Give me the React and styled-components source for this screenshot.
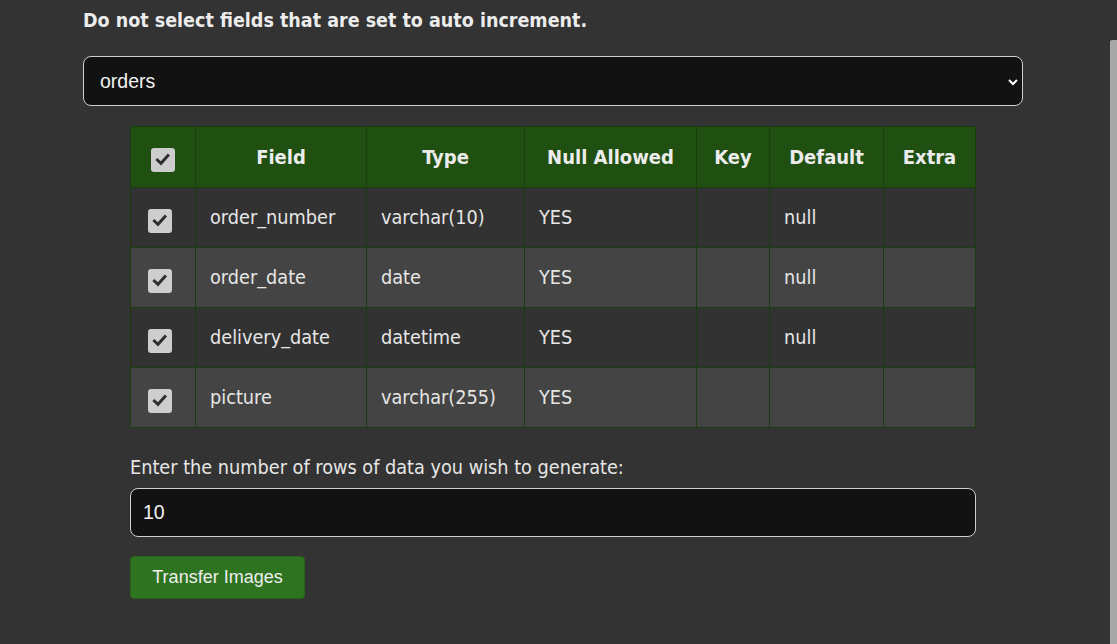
import React, { useLayoutEffect, useRef } from "react";
import styled, { createGlobalStyle } from "styled-components";

const Global = createGlobalStyle`
  html, body { margin: 0; background: #333333; overflow: hidden; }
  body { color: #e8e8e8; font-family: "DejaVu Sans Condensed", "DejaVu Sans", sans-serif; }
`;

const Viewport = styled.div`
  height: 100vh;
  overflow-y: scroll;
  background: #333333;
  &::-webkit-scrollbar { width: 7px; }
  &::-webkit-scrollbar-track { background: #333333; }
  &::-webkit-scrollbar-thumb { background: #a8a8a8; border-radius: 3px 0 0 0; }
`;

const ScrollThumb = styled.div`
  position: fixed;
  top: 40px;
  right: 0;
  bottom: 0;
  width: 7px;
  background: #a8a8a8;
  border-top-left-radius: 2px;
  pointer-events: none;
`;

const Page = styled.div`
  padding: 52px 0 45px 83px;
  box-sizing: border-box;
`;

const Panel = styled.div`
  width: 940px;
  display: flex;
  flex-direction: column;
`;

const Heading = styled.h2`
  margin: 0 0 23px;
  font-size: 19.5px;
  line-height: 24px;
  font-weight: bold;
  color: #ececec;
`;

const SelectWrap = styled.div`
  position: relative;
  height: 50px;
`;

const Select = styled.select`
  appearance: none;
  width: 100%;
  height: 50px;
  box-sizing: border-box;
  background: #121212;
  color: #f2f2f2;
  border: 1px solid #cfcfcf;
  border-radius: 8px;
  padding: 0 16px;
  font-family: "Liberation Sans", Arial, sans-serif;
  font-size: 19.5px;
  outline: none;
`;

const Chevron = styled.svg`
  position: absolute;
  right: 4px;
  top: 22px;
  pointer-events: none;
`;

const Inner = styled.div`
  margin: 20px 47px 0;
  display: flex;
  flex-direction: column;
`;

const Table = styled.table`
  width: 845px;
  border-collapse: collapse;
  table-layout: fixed;
  font-size: 19.7px;
`;

const Th = styled.th`
  width: ${(p) => p.$w}px;
  height: 61px;
  padding: 0;
  background: #204f12;
  border: 1px solid #1a3d10;
  color: #ececec;
  font-size: 20px;
  font-weight: bold;
  text-align: center;
  box-sizing: border-box;
`;

const Row = styled.tr`
  background: ${(p) => (p.$alt ? "#444444" : "#323232")};
`;

const Td = styled.td`
  height: 60px;
  padding: 0 0 0 ${(p) => (p.$check ? 17 : 14)}px;
  border: 1px solid #1a3d10;
  color: #e6e6e6;
  box-sizing: border-box;
  white-space: nowrap;
`;

const Box = styled.span`
  display: inline-flex;
  align-items: center;
  justify-content: center;
  width: ${(p) => p.$size}px;
  height: ${(p) => p.$size}px;
  background: #cdcdcd;
  border-radius: 3px;
  vertical-align: middle;
  margin-top: ${(p) => p.$offset}px;
`;

const Label = styled.div`
  margin: 28px 0 8px;
  font-size: 19.7px;
  line-height: 24px;
  color: #e6e6e6;
`;

const Input = styled.input`
  width: 846px;
  height: 49px;
  box-sizing: border-box;
  background: #121212;
  color: #f2f2f2;
  border: 1px solid #cfcfcf;
  border-radius: 8px;
  padding: 0 12px;
  font-family: "Liberation Sans", Arial, sans-serif;
  font-size: 19.5px;
  outline: none;
`;

const Button = styled.button`
  margin-top: 19px;
  align-self: flex-start;
  width: 175px;
  height: 43px;
  background: #2e731f;
  border: 1px solid #27621a;
  border-radius: 4px;
  color: #eeeeee;
  font-family: "Liberation Sans", Arial, sans-serif;
  font-size: 18px;
  cursor: pointer;
`;

const Check = ({ size = 22, offset = 0 }) => (
  <Box $size={size} $offset={offset}>
    <svg width={size * 0.64} height={size * 0.64} viewBox="0 0 16 16">
      <path d="M2.5 8.3 L6.2 11.8 L13.5 3.8" fill="none" stroke="#2e2e2e" strokeWidth="3" strokeLinecap="square" />
    </svg>
  </Box>
);

const cols = [
  { name: "", w: 65 },
  { name: "Field", w: 171 },
  { name: "Type", w: 158 },
  { name: "Null Allowed", w: 172 },
  { name: "Key", w: 73 },
  { name: "Default", w: 114 },
  { name: "Extra", w: 92 },
];

const rows = [
  ["order_number", "varchar(10)", "YES", "", "null", ""],
  ["order_date", "date", "YES", "", "null", ""],
  ["delivery_date", "datetime", "YES", "", "null", ""],
  ["picture", "varchar(255)", "YES", "", "", ""],
];

export default function App() {
  const ref = useRef(null);
  useLayoutEffect(() => {
    if (ref.current) ref.current.scrollTop = 43;
  }, []);
  return (
    <>
      <Global />
      <Viewport ref={ref}>
        <Page>
          <Panel>
            <Heading>Do not select fields that are set to auto increment.</Heading>
            <SelectWrap>
              <Select defaultValue="orders">
                <option value="orders">orders</option>
              </Select>
              <Chevron width="12" height="8" viewBox="0 0 12 8">
                <path d="M2 2 L6 6 L10 2" fill="none" stroke="#fff" strokeWidth="2" />
              </Chevron>
            </SelectWrap>
            <Inner>
              <Table>
                <thead>
                  <tr>
                    {cols.map((c, i) => (
                      <Th key={i} $w={c.w}>
                        {i === 0 ? <Check size={24} offset={6} /> : c.name}
                      </Th>
                    ))}
                  </tr>
                </thead>
                <tbody>
                  {rows.map((r, i) => (
                    <Row key={i} $alt={i % 2 === 1}>
                      <Td $check>
                        <Check size={24} offset={6} />
                      </Td>
                      {r.map((v, j) => (
                        <Td key={j}>{v}</Td>
                      ))}
                    </Row>
                  ))}
                </tbody>
              </Table>
              <Label>Enter the number of rows of data you wish to generate:</Label>
              <Input defaultValue="10" />
              <Button>Transfer Images</Button>
            </Inner>
          </Panel>
        </Page>
      </Viewport>
      <ScrollThumb />
    </>
  );
}
